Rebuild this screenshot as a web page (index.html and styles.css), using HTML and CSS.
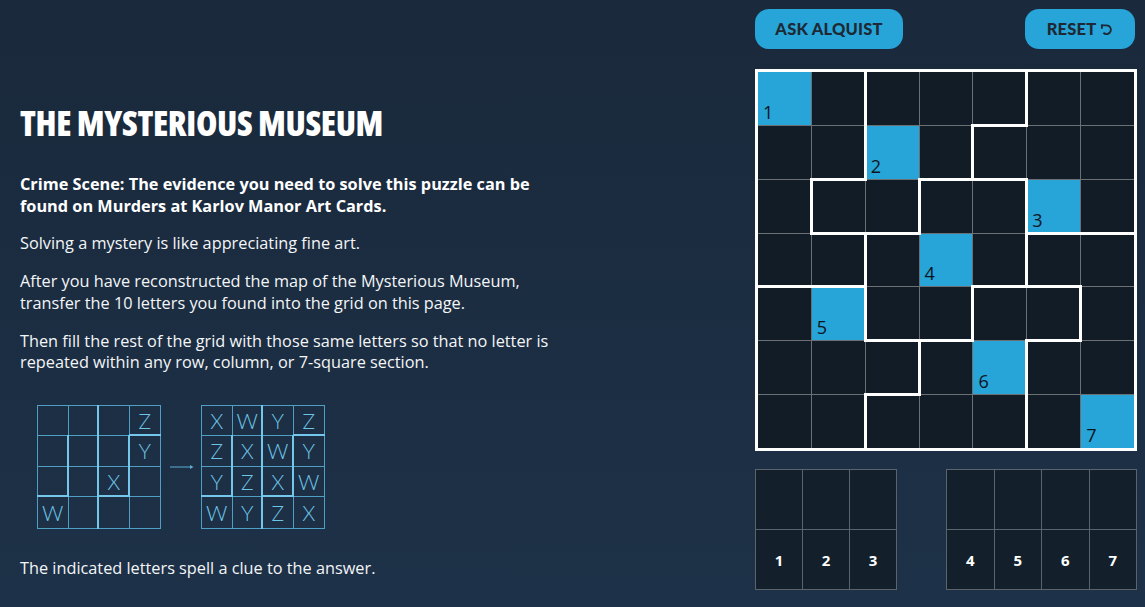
FILE: index.html
```html
<!DOCTYPE html>
<html lang="en">
<head>
<meta charset="utf-8">
<title>The Mysterious Museum</title>
<link rel="stylesheet" href="styles.css">
</head>
<body>
<main class="page">
  <section class="intro">
    <h1 class="title">THE MYSTERIOUS MUSEUM</h1>
    <p class="text lead">Crime Scene: The evidence you need to solve this puzzle can be found on Murders at Karlov Manor Art Cards.</p>
    <p class="text">Solving a mystery is like appreciating fine art.</p>
    <p class="text">After you have reconstructed the map of the Mysterious Museum, transfer the 10 letters you found into the grid on this page.</p>
    <p class="text">Then fill the rest of the grid with those same letters so that no letter is repeated within any row, column, or 7-square section.</p>
    <div class="example">
      <div class="ex">
        <span></span><span class="r"></span><span></span><span class="b">Z</span>
        <span class="r"></span><span class="r"></span><span class="r"></span><span>Y</span>
        <span class="r b"></span><span class="r"></span><span class="r b">X</span><span></span>
        <span>W</span><span class="r"></span><span></span><span></span>
      </div>
      <svg class="arrow" width="24" height="6" viewBox="0 0 24 6"><path d="M0 3H21" stroke="#5aafd2" stroke-width="1"/><path d="M20 1L23.5 3L20 5Z" fill="#5aafd2"/></svg>
      <div class="ex">
        <span>X</span><span class="r">W</span><span>Y</span><span class="b">Z</span>
        <span class="r">Z</span><span class="r">X</span><span class="r">W</span><span>Y</span>
        <span class="r b">Y</span><span class="r">Z</span><span class="r b">X</span><span>W</span>
        <span>W</span><span class="r">Y</span><span>Z</span><span>X</span>
      </div>
    </div>
    <p class="text">The indicated letters spell a clue to the answer.</p>
  </section>

  <section class="puzzle">
    <div class="actions">
      <button class="btn ask" type="button">ASK ALQUIST</button>
      <button class="btn reset" type="button">RESET
        <svg class="reset-icon" width="13" height="13" viewBox="0 0 14 14"><path d="M2 2.5H7A4.7 4.7 0 1 1 3.7 10.5" fill="none" stroke="currentColor" stroke-width="2"/><path d="M2 1.5V6.2" fill="none" stroke="currentColor" stroke-width="2"/></svg>
      </button>
    </div>

    <div class="board">
      <div class="cell hl">1</div><div class="cell wr"></div><div class="cell"></div><div class="cell"></div><div class="cell wr wb"></div><div class="cell"></div><div class="cell"></div>
      <div class="cell"></div><div class="cell wr wb"></div><div class="cell hl">2</div><div class="cell wr wb"></div><div class="cell wb"></div><div class="cell"></div><div class="cell"></div>
      <div class="cell wr"></div><div class="cell wb"></div><div class="cell wr wb"></div><div class="cell"></div><div class="cell wr"></div><div class="cell hl wb">3</div><div class="cell wb"></div>
      <div class="cell wb"></div><div class="cell wr wb"></div><div class="cell"></div><div class="cell hl">4</div><div class="cell wr wb"></div><div class="cell wb"></div><div class="cell"></div>
      <div class="cell"></div><div class="cell hl wr">5</div><div class="cell wb"></div><div class="cell wr wb"></div><div class="cell"></div><div class="cell wr wb"></div><div class="cell"></div>
      <div class="cell"></div><div class="cell"></div><div class="cell wr wb"></div><div class="cell"></div><div class="cell hl wr">6</div><div class="cell"></div><div class="cell"></div>
      <div class="cell"></div><div class="cell wr"></div><div class="cell"></div><div class="cell"></div><div class="cell wr"></div><div class="cell"></div><div class="cell hl">7</div>
    </div>

    <div class="answers">
      <div class="ans ans3">
        <span></span><span></span><span></span>
        <span>1</span><span>2</span><span>3</span>
      </div>
      <div class="ans ans4">
        <span></span><span></span><span></span><span></span>
        <span>4</span><span>5</span><span>6</span><span>7</span>
      </div>
    </div>
  </section>
</main>
</body>
</html>
```

FILE: styles.css
```css
* { box-sizing: border-box; }

html, body {
  margin: 0;
  height: 100%;
}

body {
  background: linear-gradient(180deg, #1a293b 0%, #1d3148 100%);
  color: #ffffff;
  font-family: "Open Sans", "Noto Sans", sans-serif;
  overflow: hidden;
}

.page {
  display: flex;
  justify-content: space-between;
  width: 1145px;
  height: 607px;
}

/* ---------- left column ---------- */
.intro {
  padding: 103px 0 0 20px;
  width: 600px;
}

.title {
  margin: 0 0 30px;
  font-family: "Open Sans", sans-serif;
  font-stretch: 75%;
  font-weight: 800;
  font-size: 34.5px;
  line-height: 40px;
  letter-spacing: -0.35px;
  color: #ffffff;
}

.text {
  width: 548px;
  margin: 0 0 16.5px;
  font-size: 16.3px;
  line-height: 21.5px;
  color: #f4f6f8;
}

.lead {
  font-weight: 700;
  line-height: 22px;
  color: #ffffff;
  margin-bottom: 16px;
}

.example {
  display: flex;
  align-items: center;
  margin: 31px 0 29px 17px;
}

.arrow { margin: 0 7px 0 9px; }

.ex {
  display: grid;
  grid-template-columns: repeat(4, 1fr);
  grid-template-rows: repeat(4, 1fr);
  width: 124px;
  height: 124px;
  border: 1px solid #4e9fc3;
}

.ex span {
  position: relative;
  display: flex;
  align-items: center;
  justify-content: center;
  border-right: 1px solid #4e9fc3;
  border-bottom: 1px solid #4e9fc3;
  font-family: "Lato", sans-serif;
  font-weight: 300;
  font-size: 21px;
  color: #6cc4e6;
}

.ex span:nth-child(4n) { border-right: none; }
.ex span:nth-child(n+13) { border-bottom: none; }

.ex span.r::after {
  content: "";
  position: absolute;
  top: -1px;
  bottom: -1px;
  right: -1px;
  width: 2px;
  background: #72c7ea;
}

.ex span.b::before {
  content: "";
  position: absolute;
  left: -1px;
  right: -1px;
  bottom: -1px;
  height: 2px;
  background: #72c7ea;
}

/* ---------- right column ---------- */
.puzzle {
  width: 382px;
  margin-right: 8px;
  padding-top: 9px;
  display: flex;
  flex-direction: column;
}

.actions {
  display: flex;
  justify-content: space-between;
}

.btn {
  height: 40px;
  border: none;
  border-radius: 14px;
  background: #27a4d8;
  color: #1e2935;
  font-family: "Lato", sans-serif;
  font-weight: 900;
  font-size: 16.5px;
  letter-spacing: 0.2px;
  padding: 0;
}

.ask { width: 148px; }

.reset {
  width: 110px;
  margin-right: 2px;
  display: flex;
  align-items: center;
  justify-content: center;
  gap: 4px;
}

.board {
  margin-top: 20px;
  width: 382px;
  height: 382px;
  display: grid;
  grid-template-columns: repeat(7, 1fr);
  grid-template-rows: repeat(7, 1fr);
  gap: 1px;
  background: #6b7075;
  border: 3px solid #ffffff;
}

.cell {
  position: relative;
  background: #111c27;
  display: flex;
  align-items: flex-end;
  padding: 0 0 4px 5px;
  font-family: "Open Sans", sans-serif;
  font-size: 18px;
  line-height: 18px;
  color: #0c1520;
}

.cell.hl { background: #27a4d8; }

.cell.wr::after {
  content: "";
  position: absolute;
  top: -2px;
  bottom: -2px;
  right: -2px;
  width: 3px;
  background: #ffffff;
  z-index: 2;
}

.cell.wb::before {
  content: "";
  position: absolute;
  left: -2px;
  right: -2px;
  bottom: -2px;
  height: 3px;
  background: #ffffff;
  z-index: 2;
}

.answers {
  margin-top: 18px;
  display: flex;
  justify-content: space-between;
}

.ans {
  display: grid;
  grid-template-rows: 60px 60px;
  border-top: 1px solid #5b646d;
  border-left: 1px solid #5b646d;
}

.ans3 { width: 142px; grid-template-columns: repeat(3, 1fr); }
.ans4 { width: 191px; grid-template-columns: repeat(4, 1fr); }

.ans span {
  display: flex;
  align-items: center;
  justify-content: center;
  background: #13202c;
  border-right: 1px solid #5b646d;
  border-bottom: 1px solid #5b646d;
  font-weight: 700;
  font-size: 15px;
  color: #ffffff;
}
```
